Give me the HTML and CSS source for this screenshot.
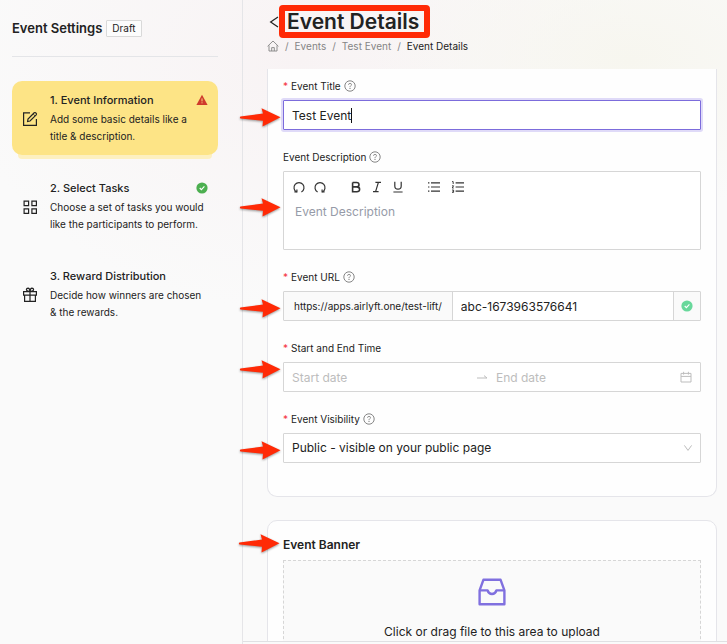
FILE: index.html
```html
<!DOCTYPE html>
<html lang="en">
<head>
<meta charset="utf-8">
<meta name="viewport" content="width=device-width, initial-scale=1">
<title>Event Details</title>
<link rel="stylesheet" href="styles.css">
</head>
<body>
<svg class="defs" aria-hidden="true">
  <defs>
    <symbol id="arrow" viewBox="0 0 46 26">
      <path d="M1.5 11.6 L24 8.6 L22.5 3.2 L41.5 12.2 L23.5 21.6 L24 15.8 L1.5 13.4 Q.2 12.5 1.5 11.6Z" fill="#ff2a06"/>
    </symbol>
    <symbol id="help" viewBox="0 0 12 12">
      <circle cx="6" cy="6" r="5.2" fill="none" stroke="currentColor" stroke-width=".9"/>
      <path d="M4.5 4.8 Q4.5 3.4 6 3.4 T7.5 4.7 Q7.5 5.5 6.6 5.9 Q6 6.2 6 7.1" fill="none" stroke="currentColor" stroke-width=".8"/>
      <circle cx="6" cy="8.4" r=".55" fill="currentColor"/>
    </symbol>
    <symbol id="check" viewBox="0 0 12 12">
      <circle cx="6" cy="6" r="5.6" fill="currentColor"/>
      <path d="M3.7 6 L5.4 7.7 L8.4 4.4" fill="none" stroke="#fff" stroke-width="1.1"/>
    </symbol>
  </defs>
</svg>
<div class="app">
  <aside class="sidebar">
    <header class="sidebar-head">
      <h2>Event Settings</h2>
      <span class="tag">Draft</span>
    </header>
    <ol class="steps">
      <li class="step active">
        <svg class="step-icon" viewBox="0 0 16 16" fill="none" stroke="currentColor" stroke-width="1.2"><path d="M8 1.8H1.6V14.4H14.4V8"/><path d="M5.6 10.4 L6 8 L12.2 1.8 Q12.9 1.2 13.6 1.8 L14.2 2.4 Q14.8 3.1 14.2 3.8 L8 10Z"/><path d="M11.2 3 L13 4.8" stroke-width=".8"/></svg>
        <div class="step-text">
          <h3>1. Event Information</h3>
          <p>Add some basic details like a title &amp; description.</p>
        </div>
        <svg class="step-state warn" viewBox="0 0 12 12"><path d="M6 .8 L11.6 10.9H.4Z" fill="currentColor"/><path d="M6 4.4V7.4M6 8.3V9.3" stroke="#fde68a" stroke-width=".9"/></svg>
      </li>
      <li class="step">
        <svg class="step-icon" viewBox="0 0 16 16" fill="none" stroke="currentColor" stroke-width="1.2"><path d="M2.1 2.1H6.6V6.6H2.1ZM9.9 2.1H14.4V6.6H9.9ZM2.1 9.9H6.6V14.4H2.1ZM9.9 9.9H14.4V14.4H9.9Z"/></svg>
        <div class="step-text">
          <h3>2. Select Tasks</h3>
          <p>Choose a set of tasks you would like the participants to perform.</p>
        </div>
        <svg class="step-state done"><use href="#check"/></svg>
      </li>
      <li class="step">
        <svg class="step-icon" viewBox="0 0 16 16" fill="none" stroke="currentColor" stroke-width="1.2"><path d="M1.6 4.6H14.4V8.2H1.6ZM2.6 8.2V14.4H13.4V8.2M8 4.6V14.4"/><path d="M8 4.4 Q4.4 4.4 4.4 2.6 Q4.5 1.2 6 1.2 Q7.8 1.3 8 4.4 Q8.2 1.3 10 1.2 Q11.5 1.2 11.6 2.6 Q11.6 4.4 8 4.4"/></svg>
        <div class="step-text">
          <h3>3. Reward Distribution</h3>
          <p>Decide how winners are chosen &amp; the rewards.</p>
        </div>
      </li>
    </ol>
  </aside>

  <main class="main">
    <header class="page-head">
      <div class="title-row">
        <a class="back" href="#" aria-label="Back"><svg viewBox="0 0 10 12"><path d="M9 1 L1.6 6 L9 11" fill="none" stroke="currentColor" stroke-width="1.2"/></svg></a>
        <h1>Event Details</h1>
      </div>
      <nav class="crumbs" aria-label="Breadcrumb">
        <a href="#" aria-label="Home"><svg viewBox="0 0 12 12" fill="none" stroke="currentColor" stroke-width=".9"><path d="M.6 6.3 L6 1 L11.4 6.3M2 5.4V11H10V5.4M4.7 11V7.6H7.3V11"/></svg></a>
        <span>/</span><a href="#">Events</a><span>/</span><a href="#">Test Event</a><span>/</span><span class="current">Event Details</span>
      </nav>
    </header>

    <div class="content">
      <form class="card details">
        <div class="field">
          <label class="required" for="title">Event Title <svg class="help"><use href="#help"/></svg></label>
          <div class="control focused">
            <input id="title" class="fit" type="text" value="Test Event"><span class="caret"></span>
            <svg class="arrow"><use href="#arrow"/></svg>
          </div>
        </div>
        <div class="field">
          <label for="desc">Event Description <svg class="help"><use href="#help"/></svg></label>
          <div class="control editor">
            <div class="toolbar">
              <button type="button" aria-label="Undo"><svg viewBox="0 0 14 14"><path d="M4.6 12 A5 5 0 1 1 9.4 12" /><path d="M2.4 11.8H4.9V9.6"/></svg></button>
              <button type="button" aria-label="Redo"><svg viewBox="0 0 14 14"><path d="M4.6 12 A5 5 0 1 1 9.4 12"/><path d="M11.6 11.8H9.1V9.6"/></svg></button>
              <button type="button" class="group" aria-label="Bold"><svg viewBox="0 0 14 14"><path stroke-width="1.6" d="M3.6 2.5H7.6 Q10 2.5 10 4.7 T7.6 6.9H3.6M7.6 6.9 Q10.6 6.9 10.6 9.3 T7.8 11.7H3.6V2.5"/></svg></button>
              <button type="button" aria-label="Italic"><svg viewBox="0 0 14 14"><path d="M5.4 2.4H11M3 11.6H8.6M8.4 2.4 L5.6 11.6"/></svg></button>
              <button type="button" aria-label="Underline"><svg viewBox="0 0 14 14"><path d="M3.8 1.8V6 Q3.8 9.2 7 9.2 T10.2 6V1.8M2.4 12H11.6"/></svg></button>
              <div class="lists group">
                <button type="button" aria-label="Bulleted list"><svg viewBox="0 0 14 14"><path d="M4 2.8H13M4 7H13M4 11.2H13M1 2.8H2.4M1 7H2.4M1 11.2H2.4"/></svg></button>
                <button type="button" aria-label="Numbered list"><svg viewBox="0 0 14 14"><path d="M4.6 2.8H13M4.6 7H13M4.6 11.2H13"/><path stroke-width=".9" d="M1 1.6H2.2V4M1 5.8H2.6L1.2 8H2.8M1 10H2.6V12.4H1M1.4 11.2H2.6"/></svg></button>
              </div>
            </div>
            <textarea id="desc" placeholder="Event Description"></textarea>
            <svg class="arrow"><use href="#arrow"/></svg>
          </div>
        </div>
        <div class="field">
          <label class="required" for="url">Event URL <svg class="help"><use href="#help"/></svg></label>
          <div class="control">
            <span class="addon prefix">https://apps.airlyft.one/test-lift/</span>
            <input id="url" type="text" value="abc-1673963576641">
            <span class="addon suffix"><svg class="valid"><use href="#check"/></svg></span>
            <svg class="arrow"><use href="#arrow"/></svg>
          </div>
        </div>
        <div class="field">
          <label class="required" for="start">Start and End Time</label>
          <div class="control">
            <input id="start" type="text" placeholder="Start date">
            <svg class="range" viewBox="0 0 12 12"><path d="M1 7H11 L8 4.6" fill="none" stroke="currentColor"/></svg>
            <input type="text" placeholder="End date" aria-label="End date">
            <svg class="calendar" viewBox="0 0 12 12"><path d="M1 2.4H11V11H1ZM1 5.4H11M3.6 .8V3.6M8.4 .8V3.6" fill="none" stroke="currentColor"/></svg>
            <svg class="arrow high"><use href="#arrow"/></svg>
          </div>
        </div>
        <div class="field">
          <label class="required" for="visibility">Event Visibility <svg class="help"><use href="#help"/></svg></label>
          <div class="control">
            <select id="visibility"><option>Public - visible on your public page</option></select>
            <svg class="chevron" viewBox="0 0 10 10"><path d="M1.4 2.4 L5 7.4 L8.6 2.4" fill="none" stroke="currentColor"/></svg>
            <svg class="arrow"><use href="#arrow"/></svg>
          </div>
        </div>
      </form>

      <section class="card banner">
        <h2>Event Banner<svg class="arrow high"><use href="#arrow"/></svg></h2>
        <button type="button" class="dropzone">
          <svg viewBox="0 0 28 28" fill="none" stroke="currentColor" stroke-width="2.4" stroke-linejoin="round"><path d="M1.6 12.4 L5.4 1.8H22.6L26.4 12.4V26.2H1.6Z"/><path d="M1.6 12.4H9.6 Q10.6 16 14 16 T18.4 12.4H26.4"/></svg>
          <span>Click or drag file to this area to upload</span>
        </button>
      </section>
    </div>
    <footer class="bottom-bar"></footer>
  </main>
</div>
</body>
</html>
```

FILE: styles.css
```css
* { box-sizing: border-box; }

body {
  margin: 0;
  font: 10px/16px Inter, "Liberation Sans", sans-serif;
  color: #222;
  background-color: #fafafa;
  background-image:
    radial-gradient(ellipse 260px 150px at 630px 60px, #f7f6ef, transparent),
    radial-gradient(ellipse 340px 250px at 300px 60px, #f8f3f4, transparent);
}

h1, h2, h3, p, ol { margin: 0; padding: 0; }
a { color: inherit; text-decoration: none; }
button { padding: 0; border: 0; background: none; color: inherit; font: inherit; }
.defs { position: absolute; width: 0; height: 0; }

.app { display: flex; height: 100vh; overflow: hidden; }

/* Sidebar */
.sidebar {
  flex: 0 0 243px;
  padding: 0 24px 0 12px;
  border-right: 1px solid #e5e5e8;
}
.sidebar-head {
  display: flex;
  align-items: center;
  gap: 4px;
  height: 57px;
  border-bottom: 1px solid #e4e5e8;
}
.sidebar-head h2 { font-size: 13px; font-weight: 600; }
.tag {
  padding: 0 5px;
  border: 1px solid #d9d9d9;
  border-radius: 1px;
  background: #fcfcfc;
  line-height: 15px;
}
.steps {
  display: flex;
  flex-direction: column;
  gap: 14px;
  padding-top: 24px;
  list-style: none;
}
.step {
  position: relative;
  display: flex;
  align-items: center;
  gap: 12px;
  padding: 11px 12px 10px 10px;
  border-radius: 10px;
}
.step.active { background: #fde486; box-shadow: 0 10px 0 -6px #fdf0c0; }
.step-icon { flex: none; width: 16px; height: 16px; }
.step-text { flex: 1; min-width: 0; }
.step h3 { margin-bottom: 3px; font-size: 11px; font-weight: 500; }
.step p { line-height: 17px; }
.step-state { position: absolute; top: 13px; right: 10px; width: 12px; height: 12px; }
.warn { color: #cf3a2c; }
.done { color: #4caf50; }

/* Main column */
.main { flex: 1; min-width: 0; display: flex; flex-direction: column; }
.page-head { flex: 0 0 69px; padding: 5px 24px 0; }
.title-row { display: flex; align-items: center; }
.back { flex: none; width: 12px; height: 12px; }
.back svg { display: block; width: 10px; height: 12px; margin-left: 2px; }
h1 {
  padding: 0 5px 0 2px;
  border: 6px solid #ff2a06;
  border-radius: 4px;
  font-size: 21px;
  line-height: 21px;
  font-weight: 600;
}
.crumbs { display: flex; align-items: center; gap: 6px; color: #858585; }
.crumbs svg { display: block; width: 12px; height: 12px; }
.crumbs .current { color: #222; }

.content {
  flex: 1;
  min-height: 0;
  padding: 0 10px 0 24px;
  overflow-x: visible;
  overflow-y: clip;
}
.card {
  padding: 16px 15px;
  border: 1px solid #e5e5ea;
  border-radius: 10px;
  background: #fefefe;
}
.details {
  margin-bottom: 23px;
  padding: 9px 15px 14px;
  border-top: 0;
  border-radius: 0 0 10px 10px;
}

/* Form fields */
.field { margin-bottom: 19px; }
.field label { display: flex; align-items: center; gap: 3px; margin-bottom: 6px; }
.required::before { content: "*"; color: #f5333f; }
.help { width: 12px; height: 12px; color: #777; }
.control {
  position: relative;
  display: flex;
  align-items: center;
  height: 30px;
  border: 1px solid #d6d6d6;
  border-radius: 1px;
  background: #fff;
}
.focused { border-color: #7c6cdc; box-shadow: 0 0 0 2px #dfdaf8; }
input, select, textarea {
  flex: 1;
  min-width: 0;
  height: 28px;
  margin: 0;
  padding: 0 8px;
  border: 0;
  outline: 0;
  background: none;
  color: #222;
  font: 12px/20px Inter, "Liberation Sans", sans-serif;
}
select { appearance: none; }
::placeholder { color: #bdbdbd; opacity: 1; }
.fit { flex: none; field-sizing: content; padding-right: 0; }
.caret { width: 1px; height: 15px; background: #111; }
.addon { align-self: stretch; display: flex; align-items: center; background: #fafafa; }
.prefix { padding: 0 10px; border-right: 1px solid #d6d6d6; }
.suffix { padding: 0 7px; border-left: 1px solid #d6d6d6; }
.valid { width: 12px; height: 12px; color: #68d89b; }
.range { flex: none; width: 12px; height: 12px; color: #bdbdbd; }
.calendar { flex: none; width: 12px; height: 12px; margin-right: 8px; color: #bdbdbd; }
.chevron {
  position: absolute;
  right: 7px;
  width: 10px;
  height: 10px;
  color: #bdbdbd;
  pointer-events: none;
}

.editor { flex-direction: column; align-items: stretch; height: 79px; }
.toolbar { display: flex; gap: 7px; padding: 8px 8px 0; }
.toolbar button { width: 14px; height: 14px; }
.toolbar .group { margin-left: 15px; }
.lists { display: flex; gap: 10px; }
.toolbar svg { display: block; width: 14px; height: 14px; fill: none; stroke: #333; stroke-width: 1.2; }
textarea { padding: 8px 11px; resize: none; }
textarea::placeholder { color: #969ba8; }

/* Pointer arrows */
.arrow {
  position: absolute;
  right: 100%;
  top: calc(50% - 10px);
  width: 46px;
  height: 26px;
  margin-right: -1px;
  filter: drop-shadow(0 1px 1px #0006);
  pointer-events: none;
}
.arrow.high { top: -6px; }
.editor .arrow { top: 23px; }

/* Banner upload */
.banner h2 { position: relative; margin-bottom: 7px; font-size: 12px; font-weight: 600; }
.dropzone {
  display: flex;
  flex-direction: column;
  align-items: center;
  gap: 18px;
  width: 100%;
  height: 140px;
  padding-top: 17px;
  border: 1px dashed #d6d6d6;
  background: #fafafa;
  font-size: 12px;
}
.dropzone svg { flex: none; width: 28px; height: 28px; color: #8070df; }

.bottom-bar { flex: 0 0 3px; border-top: 1px solid #e0e0e3; }
```
